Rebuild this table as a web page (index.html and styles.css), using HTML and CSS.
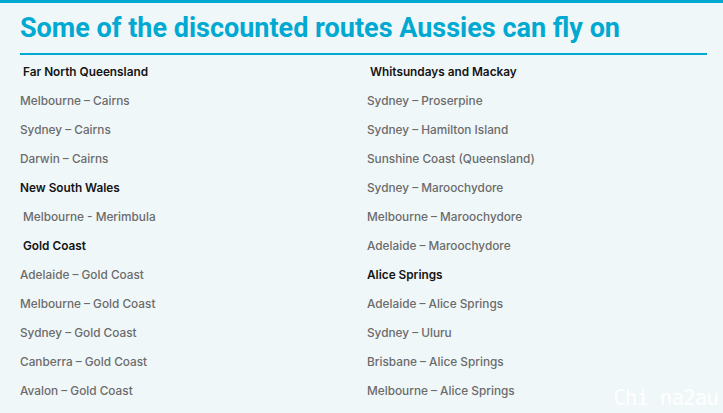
FILE: index.html
```html
<!DOCTYPE html>
<html>
<head>
<meta charset="utf-8">
<link rel="stylesheet" href="styles.css">
</head>
<body>
<div class="page">
  <h1 class="title">Some of the discounted routes Aussies can fly on</h1>
  <div class="rule"></div>
  <div class="cols">
    <ul class="col">
      <li class="head ind">Far North Queensland</li>
      <li>Melbourne – Cairns</li>
      <li>Sydney – Cairns</li>
      <li>Darwin – Cairns</li>
      <li class="head">New South Wales</li>
      <li class="ind">Melbourne - Merimbula</li>
      <li class="head ind">Gold Coast</li>
      <li>Adelaide – Gold Coast</li>
      <li>Melbourne – Gold Coast</li>
      <li>Sydney – Gold Coast</li>
      <li>Canberra – Gold Coast</li>
      <li>Avalon – Gold Coast</li>
    </ul>
    <ul class="col">
      <li class="head ind">Whitsundays and Mackay</li>
      <li>Sydney – Proserpine</li>
      <li>Sydney – Hamilton Island</li>
      <li>Sunshine Coast (Queensland)</li>
      <li>Sydney – Maroochydore</li>
      <li>Melbourne – Maroochydore</li>
      <li>Adelaide – Maroochydore</li>
      <li class="head">Alice Springs</li>
      <li>Adelaide – Alice Springs</li>
      <li>Sydney – Uluru</li>
      <li>Brisbane – Alice Springs</li>
      <li>Melbourne – Alice Springs</li>
    </ul>
  </div>
  <div class="mark">Chi na2au</div>
</div>
</body>
</html>
```
FILE: styles.css
```css
html, body {
  margin: 0;
  padding: 0;
}
body {
  width: 723px;
  height: 413px;
  overflow: hidden;
  background: #f0f7f9;
  font-family: Inter, "Liberation Sans", sans-serif;
}
.page {
  position: relative;
  height: 413px;
  box-sizing: border-box;
  border-top: 3px solid #00a9d1;
  padding: 0 16px 0 20px;
}
.title {
  margin: 0;
  padding-top: 9px;
  height: 36px;
  font-family: Roboto, "Liberation Sans", sans-serif;
  font-weight: 700;
  font-size: 27px;
  line-height: 32px;
  letter-spacing: 0;
  color: #00a9d1;
  white-space: nowrap;
}
.rule {
  height: 2px;
  background: #00a9d1;
  margin-top: 5px;
}
.cols {
  display: grid;
  grid-template-columns: 347px 1fr;
  margin-top: 3px;
}
.col {
  list-style: none;
  margin: 0;
  padding: 0;
}
.col li {
  height: 29px;
  line-height: 29px;
  font-size: 11.8px;
  font-weight: 500;
  color: #6b6b6b;
  white-space: nowrap;
}
.col li.head {
  color: #141414;
  font-weight: 600;
}
.col li.ind {
  padding-left: 3px;
}
.mark {
  position: absolute;
  right: 5px;
  bottom: 3px;
  font-family: "DejaVu Sans Mono", monospace;
  font-size: 21px;
  line-height: 24px;
  letter-spacing: -1px;
  color: rgba(255,255,255,0.95);
}
```
